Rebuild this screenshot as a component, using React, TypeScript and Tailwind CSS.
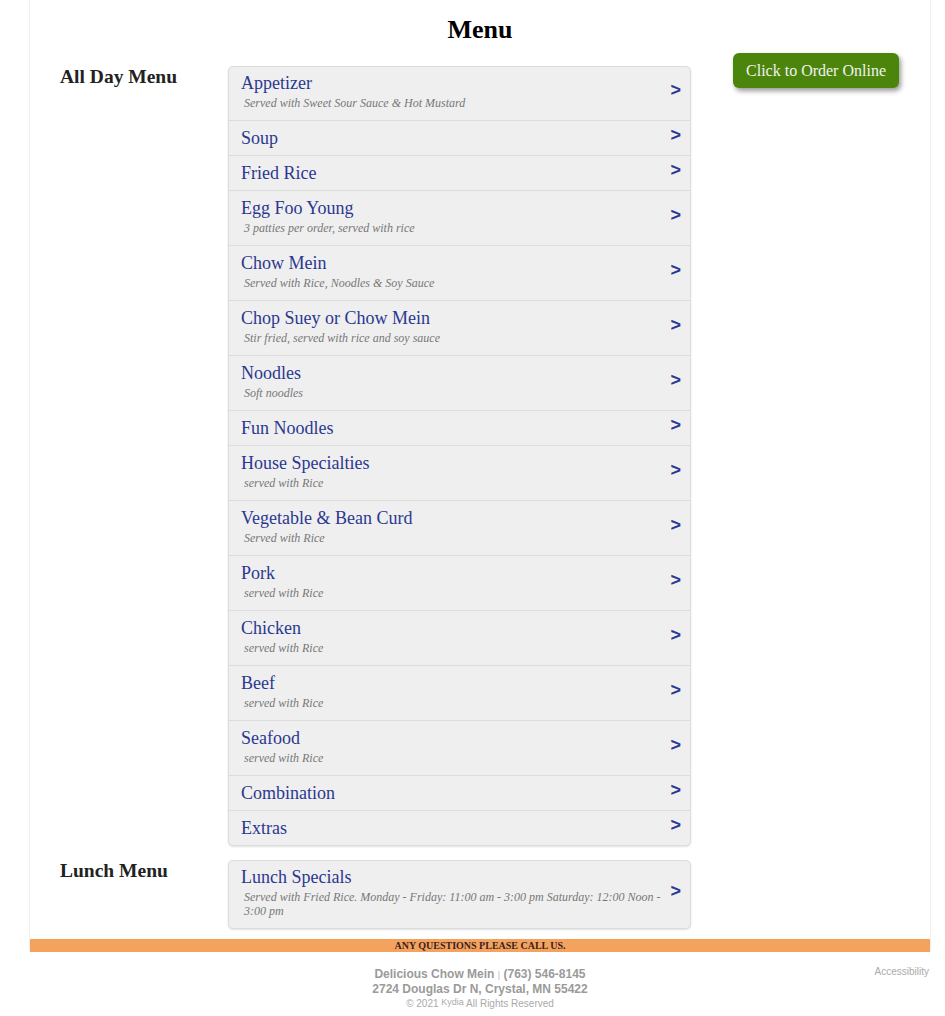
type Item = { name: string; desc?: string };

const allDay: Item[] = [
  { name: "Appetizer", desc: "Served with Sweet Sour Sauce & Hot Mustard" },
  { name: "Soup" },
  { name: "Fried Rice" },
  { name: "Egg Foo Young", desc: "3 patties per order, served with rice" },
  { name: "Chow Mein", desc: "Served with Rice, Noodles & Soy Sauce" },
  { name: "Chop Suey or Chow Mein", desc: "Stir fried, served with rice and soy sauce" },
  { name: "Noodles", desc: "Soft noodles" },
  { name: "Fun Noodles" },
  { name: "House Specialties", desc: "served with Rice" },
  { name: "Vegetable & Bean Curd", desc: "Served with Rice" },
  { name: "Pork", desc: "served with Rice" },
  { name: "Chicken", desc: "served with Rice" },
  { name: "Beef", desc: "served with Rice" },
  { name: "Seafood", desc: "served with Rice" },
  { name: "Combination" },
  { name: "Extras" },
];

const lunch: Item[] = [
  {
    name: "Lunch Specials",
    desc: "Served with Fried Rice. Monday - Friday: 11:00 am - 3:00 pm Saturday: 12:00 Noon - 3:00 pm",
  },
];

function MenuBox({ items }: { items: Item[] }) {
  return (
    <div className="w-[463px] overflow-hidden rounded-[5px] border border-[#dcdcdc] bg-[#efefef] shadow-[0_1px_2px_rgba(0,0,0,0.12)]">
      {items.map((item, i) => (
        <div
          key={item.name}
          className={`flex items-center pl-[12px] pr-[9px] pb-[7px] ${i > 0 ? "border-t border-[#dcdcdc] pt-[7px]" : "pt-[6px]"}`}
        >
          <div className="flex-1 pr-[8px]">
            <div className="text-[18px] leading-[20px] text-[#2b388f]">{item.name}</div>
            {item.desc && (
              <div className="mt-[3px] mb-[3px] pl-[3px] text-[12px] italic leading-[14px] text-[#777]">
                {item.desc}
              </div>
            )}
          </div>
          <span className="-mt-[6px] font-['Liberation_Sans',Arial,sans-serif] text-[18px] font-bold leading-none text-[#2b388f]">
            &gt;
          </span>
        </div>
      ))}
    </div>
  );
}

function Section({ title, items }: { title: string; items: Item[] }) {
  return (
    <div className="flex">
      <h2 className="w-[168px] pt-[1px] text-[19.5px] font-bold leading-[20px] text-[#222]">{title}</h2>
      <MenuBox items={items} />
    </div>
  );
}

export default function App() {
  return (
    <div className="min-h-screen bg-white font-['Liberation_Serif','Times_New_Roman',serif]">
      <div className="ml-[29px] w-[902px] border-x border-[#efefef]">
        <h1 className="pt-[15px] text-center text-[26px] font-bold leading-[30px] text-black">Menu</h1>
        <div className="flex pl-[30px]">
          <div className="mt-[21px] flex flex-col gap-[14px]">
            <Section title="All Day Menu" items={allDay} />
            <Section title="Lunch Menu" items={lunch} />
          </div>
          <div className="ml-[42px] mt-[8px]">
            <button className="h-[35px] w-[166px] rounded-[6px] bg-[#4b850b] text-[16px] text-[#f2f2f2] shadow-[2px_3px_5px_rgba(0,0,0,0.4)]">
              Click to Order Online
            </button>
          </div>
        </div>
        <div className="mt-[10px] h-[13px] bg-[#f4a35f] text-center text-[10px] font-bold leading-[13px] text-[#3b1d1d]">
          ANY QUESTIONS PLEASE CALL US.
        </div>
      </div>
      <div className="relative ml-[29px] w-[902px] pt-[15px] text-center font-['Liberation_Sans',Arial,sans-serif] text-[#9a9a9a]">
        <div className="text-[12px] font-bold leading-[14px]">
          Delicious Chow Mein <span className="text-[9px] font-normal text-[#bbb]">|</span> (763) 546-8145
        </div>
        <div className="text-[12px] font-bold leading-[14px]">2724 Douglas Dr N, Crystal, MN 55422</div>
        <div className="mt-[2px] text-[10px] leading-[12px] text-[#aaa]">
          © 2021 <span className="relative -top-[2px] text-[9px]">Kydia</span> All Rights Reserved
        </div>
        <div className="absolute right-[2px] top-[14px] text-[10px] leading-[12px] text-[#aaa]">Accessibility</div>
      </div>
    </div>
  );
}
